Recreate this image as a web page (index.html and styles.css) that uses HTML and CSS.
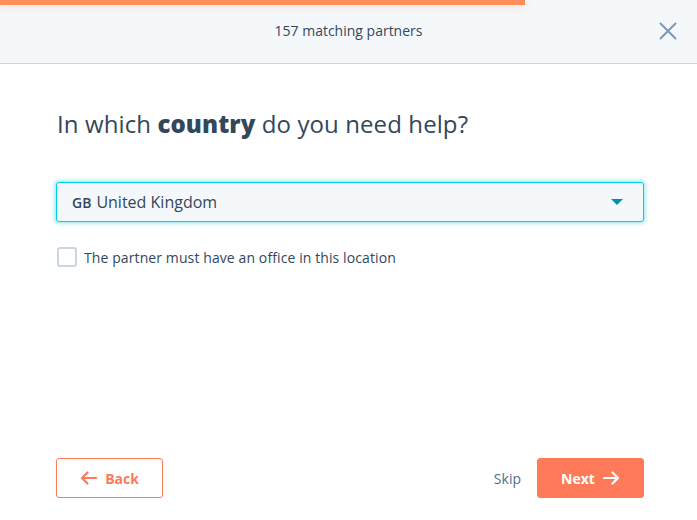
FILE: index.html
```html
<!DOCTYPE html>
<html>
<head>
<meta charset="utf-8">
<link rel="stylesheet" href="styles.css">
</head>
<body>
<div class="page">
  <header class="header">
    <div class="progress"></div>
    <div class="count">157 matching partners</div>
    <button class="close" aria-label="Close">
      <svg width="18" height="18" viewBox="0 0 18 18"><path d="M1.5 1.5 L16.5 16.5 M16.5 1.5 L1.5 16.5" stroke="#7c98b6" stroke-width="2" stroke-linecap="round" fill="none"/></svg>
    </button>
  </header>
  <main class="main">
    <h1 class="question">In which <strong>country</strong> do you need help?</h1>
    <div class="select">
      <span class="code">GB</span><span class="value">United Kingdom</span>
      <span class="caret"></span>
    </div>
    <label class="check">
      <span class="box"></span>
      <span class="check-text">The partner must have an office in this location</span>
    </label>
  </main>
  <footer class="footer">
    <button class="btn btn-back">
      <svg width="17" height="14" viewBox="0 0 17 14"><path d="M16 7 H2 M7.5 1.5 L2 7 L7.5 12.5" stroke="#ff7a59" stroke-width="2.2" fill="none" stroke-linecap="round" stroke-linejoin="round"/></svg>
      Back
    </button>
    <div class="right">
      <button class="skip">Skip</button>
      <button class="btn btn-next">
        Next
        <svg width="17" height="14" viewBox="0 0 17 14"><path d="M1 7 H15 M9.5 1.5 L15 7 L9.5 12.5" stroke="#ffffff" stroke-width="2.2" fill="none" stroke-linecap="round" stroke-linejoin="round"/></svg>
      </button>
    </div>
  </footer>
</div>
</body>
</html>
```
FILE: styles.css
```css
* { box-sizing: border-box; }
html, body { margin: 0; padding: 0; background: #ffffff; }
body { font-family: "Open Sans", "Noto Sans", sans-serif; color: #33475b; }
.page { width: 697px; height: 520px; display: flex; flex-direction: column; }
.header {
  position: relative;
  height: 64px;
  background: #f5f8fa;
  border-bottom: 1px solid #cbd6e2;
  display: flex;
  align-items: center;
  justify-content: center;
}
.progress {
  position: absolute;
  left: 0; top: 0;
  width: 525px; height: 5px;
  background: #ff8f59;
  box-shadow: 0 2px 8px rgba(255, 143, 89, 0.25);
}
.count { font-size: 14px; color: #33475b; margin-top: -2px; }
.close {
  position: absolute;
  right: 20px; top: 22px;
  background: none; border: 0; padding: 0; width: 18px; height: 18px; cursor: pointer;
}
.main { padding: 0 53px 0 56px; flex: 1; }
.question {
  margin: 43px 0 0 1px;
  font-size: 24px;
  font-weight: 400;
  line-height: 34px;
  letter-spacing: 0.1px;
  color: #33475b;
}
.question strong { font-weight: 800; }
.select {
  margin-top: 41px;
  height: 40px;
  background: #f5f8fa;
  border: 1px solid #00d0e4;
  border-radius: 3px;
  box-shadow: 0 0 4px 1px rgba(0, 208, 228, 0.5);
  display: flex;
  align-items: center;
  padding: 0 20px 0 15px;
  font-size: 16px;
}
.code { font-size: 14px; font-weight: 600; margin-right: 5px; margin-top: 1px; }
.value { flex: 1; }
.caret {
  width: 0; height: 0;
  border-left: 6px solid transparent;
  border-right: 6px solid transparent;
  border-top: 6px solid #0091ae;
}
.check { display: flex; align-items: center; margin-top: 25px; margin-left: 1px; }
.box {
  width: 20px; height: 20px;
  border: 2px solid #cbd6e2;
  border-radius: 3px;
  background: #ffffff;
  margin-right: 7px;
}
.check-text { font-size: 14px; color: #33475b; letter-spacing: 0.1px; }
.footer {
  display: flex;
  justify-content: space-between;
  align-items: center;
  padding: 0 53px 22px 56px;
}
.btn {
  height: 40px;
  width: 107px;
  border-radius: 3px;
  font-family: inherit;
  font-size: 14px;
  font-weight: 700;
  display: flex;
  align-items: center;
  justify-content: center;
  gap: 8px;
  cursor: pointer;
}
.btn-back { background: #ffffff; border: 1px solid #ff7a59; color: #ff7a59; }
.btn-next { background: #ff7a59; border: 1px solid #ff7a59; color: #ffffff; }
.right { display: flex; align-items: center; gap: 16px; }
.skip { background: none; border: 0; padding: 0; font-family: inherit; font-size: 14px; color: #516f90; cursor: pointer; }
```
